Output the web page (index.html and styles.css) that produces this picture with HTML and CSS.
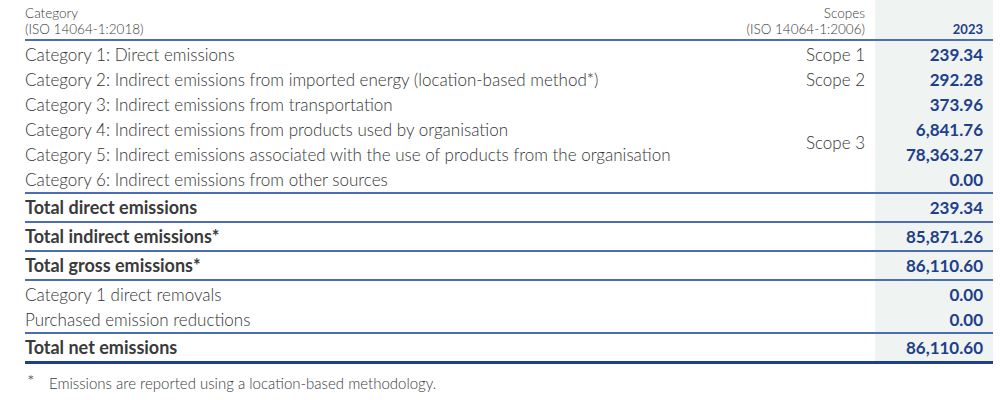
FILE: index.html
```html
<!DOCTYPE html>
<html>
<head>
<meta charset="utf-8">
<link rel="stylesheet" href="styles.css">
</head>
<body>
<div class="wrap">
<table class="ghg">
  <colgroup><col class="c-cat"><col class="c-scope"><col class="c-val"></colgroup>
  <thead>
    <tr class="head">
      <th class="cat">Category<br>(ISO 14064-1:2018)</th>
      <th class="scope">Scopes<br>(ISO 14064-1:2006)</th>
      <th class="val">2023</th>
    </tr>
  </thead>
  <tbody class="grp first">
    <tr><td>Category 1: Direct emissions</td><td class="scope">Scope 1</td><td class="val">239.34</td></tr>
    <tr><td>Category 2: Indirect emissions from imported energy (location-based method*)</td><td class="scope">Scope 2</td><td class="val">292.28</td></tr>
    <tr><td>Category 3: Indirect emissions from transportation</td><td class="scope end" rowspan="4">Scope 3</td><td class="val">373.96</td></tr>
    <tr><td>Category 4: Indirect emissions from products used by organisation</td><td class="val">6,841.76</td></tr>
    <tr><td>Category 5: Indirect emissions associated with the use of products from the organisation</td><td class="val">78,363.27</td></tr>
    <tr class="last"><td>Category 6: Indirect emissions from other sources</td><td class="val">0.00</td></tr>
  </tbody>
  <tbody class="tot">
    <tr><td colspan="2">Total direct emissions</td><td class="val">239.34</td></tr>
    <tr><td colspan="2">Total indirect emissions*</td><td class="val">85,871.26</td></tr>
    <tr><td colspan="2">Total gross emissions*</td><td class="val">86,110.60</td></tr>
  </tbody>
  <tbody class="grp second">
    <tr><td colspan="2">Category 1 direct removals</td><td class="val">0.00</td></tr>
    <tr class="last"><td colspan="2">Purchased emission reductions</td><td class="val">0.00</td></tr>
  </tbody>
  <tbody class="tot net">
    <tr><td colspan="2">Total net emissions</td><td class="val">86,110.60</td></tr>
  </tbody>
</table>
<p class="note"><span class="star">*</span>Emissions are reported using a location-based methodology.</p>
</div>
</body>
</html>
```
FILE: styles.css
```css
html, body {
  margin: 0;
  padding: 0;
  background: #ffffff;
}
.wrap {
  padding: 0 7px 0 25px;
  font-family: "Lato", "Open Sans", sans-serif;
  color: #333333;
}
.ghg {
  width: 968px;
  border-collapse: collapse;
  table-layout: fixed;
}
.c-scope { width: 170px; }
.c-val { width: 118px; }
.ghg td, .ghg th {
  padding: 0;
  vertical-align: middle;
  white-space: nowrap;
}
.ghg .val {
  background: #eff3f1;
  text-align: right;
  padding-right: 10px;
  font-weight: 700;
  color: #1e3f8b;
}
.head th {
  height: 37px;
  vertical-align: bottom;
  font-size: 13.5px;
  line-height: 16px;
  font-weight: 300;
  color: #3a3a3a;
  padding-bottom: 2px;
  border-bottom: 2px solid #4a6db3;
}
.head th.cat { text-align: left; }
.head th.scope { text-align: right; padding-right: 10px; }
.head th.val { font-size: 13px; color: #1e3f8b; font-weight: 700; }
.ghg tbody td {
  font-size: 17px;
  line-height: 25px;
  height: 25px;
  font-weight: 300;
}
.ghg td.val { font-size: 17px; font-weight: 700; }
.ghg td.scope {
  text-align: right;
  padding-right: 10px;
}
.grp.first tr:first-child td { padding-top: 1px; }
.grp.second tr:first-child td { padding-top: 1px; }
.grp tr.last td, .ghg td.end { border-bottom: 2px solid #4a6db3; }
.ghg .tot td {
  height: 27px;
  font-weight: 700;
  font-size: 18px;
  border-bottom: 2px solid #4a6db3;
}
.ghg .tot td.val { font-size: 17px; }
.tot td:first-child { color: #3a3a3a; }
.ghg .net td {
  border-bottom: 3px solid #1e3f8b;
}
.note {
  margin: 10px 0 0 0;
  font-size: 15px;
  font-weight: 300;
  color: #3a3a3a;
}
.note .star {
  display: inline-block;
  width: 22px;
  padding-left: 2px;
  font-size: 18px;
  line-height: 15px;
  vertical-align: top;
}
```
